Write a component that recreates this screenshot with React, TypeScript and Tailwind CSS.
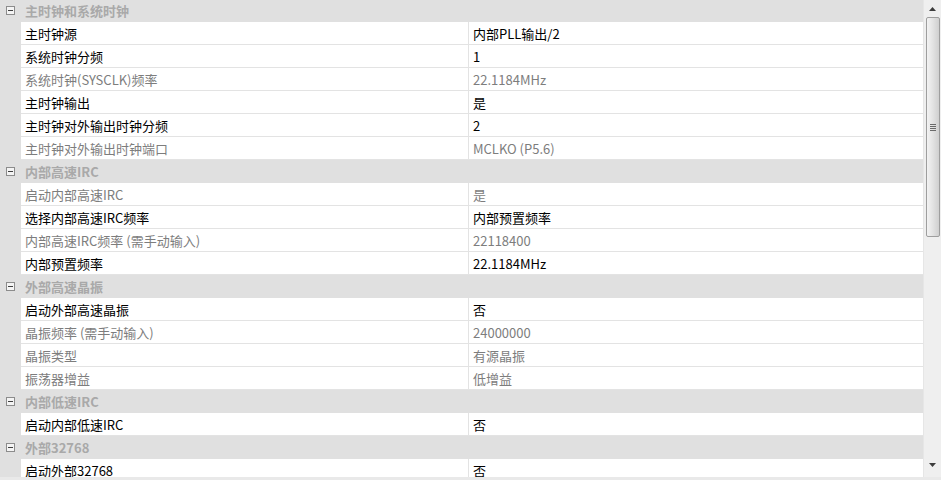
import React from "react";

type Item = { name: string; value: string; dim?: boolean };
type Group = { title: string; items: Item[] };

const groups: Group[] = [
  {
    title: "主时钟和系统时钟",
    items: [
      { name: "主时钟源", value: "内部PLL输出/2" },
      { name: "系统时钟分频", value: "1" },
      { name: "系统时钟(SYSCLK)频率", value: "22.1184MHz", dim: true },
      { name: "主时钟输出", value: "是" },
      { name: "主时钟对外输出时钟分频", value: "2" },
      { name: "主时钟对外输出时钟端口", value: "MCLKO (P5.6)", dim: true },
    ],
  },
  {
    title: "内部高速IRC",
    items: [
      { name: "启动内部高速IRC", value: "是", dim: true },
      { name: "选择内部高速IRC频率", value: "内部预置频率" },
      { name: "内部高速IRC频率 (需手动输入)", value: "22118400", dim: true },
      { name: "内部预置频率", value: "22.1184MHz" },
    ],
  },
  {
    title: "外部高速晶振",
    items: [
      { name: "启动外部高速晶振", value: "否" },
      { name: "晶振频率 (需手动输入)", value: "24000000", dim: true },
      { name: "晶振类型", value: "有源晶振", dim: true },
      { name: "振荡器增益", value: "低增益", dim: true },
    ],
  },
  {
    title: "内部低速IRC",
    items: [{ name: "启动内部低速IRC", value: "否" }],
  },
  {
    title: "外部32768",
    items: [{ name: "启动外部32768", value: "否" }],
  },
];

function MinusBox() {
  return (
    <div className="w-[9px] h-[9px] border border-[#8c8c8c] bg-[#f4f4f4] flex items-center justify-center">
      <div className="w-[5px] h-px bg-[#404040]" />
    </div>
  );
}

function CategoryRow({ title }: { title: string }) {
  return (
    <div className="flex h-[23px] shrink-0 bg-[#e0e0e0]">
      <div className="w-[21px] flex items-center justify-center">
        <MinusBox />
      </div>
      <div className="flex-1 flex items-center pl-1 font-bold text-[#a9a9a9]">{title}</div>
    </div>
  );
}

function PropRow({ item }: { item: Item }) {
  const color = item.dim ? "text-[#7d7d7d]" : "text-black";
  return (
    <div className="flex h-[23px] shrink-0">
      <div className="w-[21px] bg-[#e0e0e0]" />
      <div className={`w-[448px] flex items-center pl-1 bg-white border-b border-r border-[#e3e3e3] ${color}`}>
        {item.name}
      </div>
      <div className={`flex-1 flex items-center pl-1 bg-white border-b border-[#e3e3e3] ${color}`}>
        {item.value}
      </div>
    </div>
  );
}

function Scrollbar() {
  return (
    <div className="w-[18px] h-full bg-[#efefef] border-l border-[#e6e6e6] flex flex-col items-center">
      <div className="h-[17px] w-full flex items-center justify-center">
        <svg width="7" height="4" viewBox="0 0 7 4">
          <path d="M3.5 0 L7 4 L0 4 Z" fill="#3c3c3c" />
        </svg>
      </div>
      <div className="w-[14px] h-[220px] rounded-[2px] border border-[#9e9e9e] bg-gradient-to-r from-[#f3f3f3] via-[#e2e2e2] to-[#cfcfcf] flex items-center justify-center">
        <div className="flex flex-col gap-px">
          <div className="w-[6px] h-px bg-[#6a6a6a]" />
          <div className="w-[6px] h-px bg-[#6a6a6a]" />
          <div className="w-[6px] h-px bg-[#6a6a6a]" />
          <div className="w-[6px] h-px bg-[#6a6a6a]" />
        </div>
      </div>
      <div className="flex-1" />
      <div className="h-[17px] w-full flex items-center justify-center mb-[4px]">
        <svg width="7" height="4" viewBox="0 0 7 4">
          <path d="M0 0 L7 0 L3.5 4 Z" fill="#3c3c3c" />
        </svg>
      </div>
    </div>
  );
}

export default function App() {
  return (
    <div
      className="w-[941px] h-[480px] bg-[#e9e9e9] overflow-hidden flex flex-col text-[13px] leading-none"
      style={{ fontFamily: '"Noto Sans CJK SC", "Noto Sans", sans-serif' }}
    >
      <div className="flex h-[477px]">
        <div className="w-[923px] h-full overflow-hidden bg-white">
          <div className="flex flex-col -mt-px">
            {groups.map((g) => (
              <React.Fragment key={g.title}>
                <CategoryRow title={g.title} />
                {g.items.map((it) => (
                  <PropRow key={it.name} item={it} />
                ))}
              </React.Fragment>
            ))}
          </div>
        </div>
        <Scrollbar />
      </div>
    </div>
  );
}
